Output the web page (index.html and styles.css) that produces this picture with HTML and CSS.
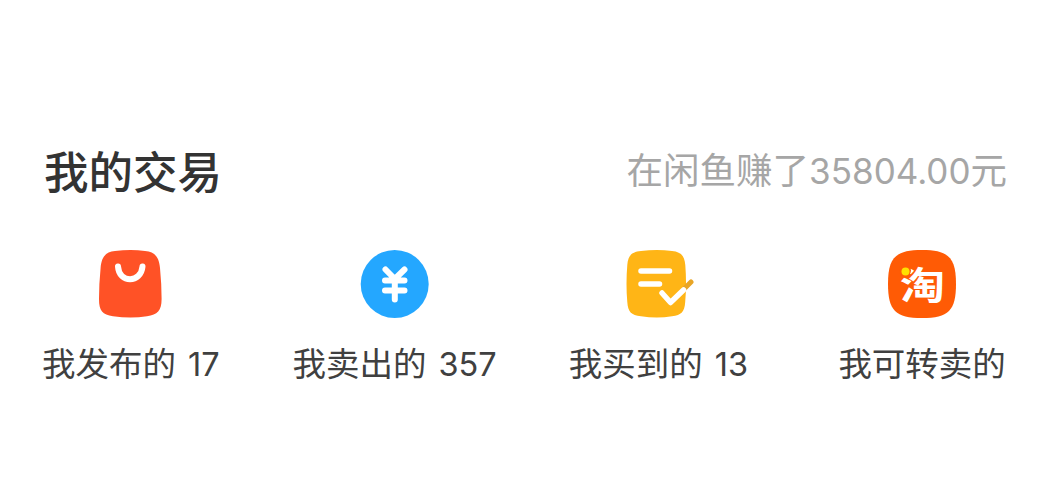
FILE: index.html
```html
<!DOCTYPE html>
<html lang="zh-CN">
<head>
  <meta charset="UTF-8" />
  <meta name="viewport" content="width=device-width, initial-scale=1.0" />
  <title>我的交易</title>
  <link rel="stylesheet" href="styles.css">
</head>
<body>
  <section class="trade">
    <header class="trade-header">
      <h2>我的交易</h2>
      <span class="earned">在闲鱼赚了<span class="amount">35804.00</span>元</span>
    </header>

    <div class="trade-list">
      <a class="trade-item">
        <svg class="icon" viewBox="0 0 72 72">
          <path fill="#ff5226" d="M20 3Q36 .8 50 3C60.500 4 64 9.500 65 20Q66.600 36 66.600 51C66.500 63 62.500 66.800 52 68.200Q36 71 18 68.200C7.500 66.800 4 63 4 51Q4 36 5.600 20C6.500 9.500 10 4 20 3Z"/>
          <path class="stroke bag-smile" d="M23 18.500C24 35.500 46 35.500 47.500 18.500"/>
        </svg>
        <span class="label">我发布的<span class="count">17</span></span>
      </a>

      <a class="trade-item">
        <svg class="icon" viewBox="0 0 72 72">
          <circle cx="35.700" cy="36" r="34" fill="#24a7ff"/>
          <path class="stroke yen" d="M26.500 21.500L35.800 31L45.500 21.500M26 32.500H45.500M26 42.500H45.500M35.800 32V51.500"/>
        </svg>
        <span class="label">我卖出的<span class="count">357</span></span>
      </a>

      <a class="trade-item">
        <svg class="icon" viewBox="0 0 72 72">
          <path fill="#ffb516" d="M19 3Q35 .8 50 3C59.500 4 62.500 8 63.300 17Q64.800 36 63.200 54C62.500 64 59.500 67 50 68.200Q35 71 19 68.200C9 67 6 64 5.300 54Q3.700 36 5.300 17C6 8 9 4 19 3Z"/>
          <path class="stroke lines" d="M19 23H47.500M19 36H37.500"/>
          <path class="tick-end" d="M60 43L69 34"/>
          <path class="stroke tick" d="M40 45L48.500 54.500L61.500 42"/>
        </svg>
        <span class="label">我买到的<span class="count">13</span></span>
      </a>

      <a class="trade-item">
        <svg class="icon" viewBox="0 0 72 72">
          <path fill="#ff5b05" d="M36 2C62.500 2 70 9.500 70 36S62.500 70 36 70S2 62.500 2 36S9.500 2 36 2Z"/>
          <text class="tao" transform="translate(36.500 50.500) scale(1 .84)">淘</text>
          <circle cx="19" cy="22.500" r="6" fill="#ff5b05"/>
          <circle cx="19.500" cy="23.500" r="4" fill="#ffdf00"/>
        </svg>
        <span class="label">我可转卖的</span>
      </a>
    </div>
  </section>
</body>
</html>
```
FILE: styles.css
```css
body {
  margin: 0;
  background-color: #fff;
  color: #333;
  font-family: "Noto Sans CJK SC", sans-serif;
  overflow-x: hidden;
}

.trade {
  padding-top: 138px;
}

.trade-header {
  display: flex;
  justify-content: space-between;
  align-items: center;
  height: 64px;
  padding: 0 46px 0 44px;
}

h2 {
  margin: 0;
  font-size: 44.5px;
  font-weight: 500;
  line-height: 64px;
}

.earned {
  color: #a6a6a6;
  font-size: 36.5px;
  line-height: 60px;
  white-space: nowrap;
}

.amount,
.count {
  font-family: Inter, "Liberation Sans", sans-serif;
}

.amount {
  font-size: 35px;
}

.trade-list {
  display: grid;
  grid-template-columns: repeat(4, 1fr);
  margin: 0 -1px;
  padding-top: 46px;
}

.trade-item {
  display: flex;
  flex-direction: column;
  align-items: center;
}

.icon {
  width: 72px;
  height: 72px;
}

.label {
  margin-top: 17px;
  color: #404040;
  font-size: 33.5px;
  line-height: 50px;
  white-space: nowrap;
}

.count {
  margin-left: 12px;
  font-size: 32.5px;
}

.stroke {
  fill: none;
  stroke: #fff;
  stroke-linecap: round;
  stroke-linejoin: round;
}

.bag-smile { stroke-width: 6; }
.yen       { stroke-width: 6; }
.lines     { stroke-width: 5.500; }
.tick      { stroke-width: 5.500; }

.tick-end {
  fill: none;
  stroke: #e8a526;
  stroke-width: 5;
  stroke-linecap: round;
}

.tao {
  fill: #fff;
  font-size: 45px;
  font-weight: 700;
  text-anchor: middle;
}
```
